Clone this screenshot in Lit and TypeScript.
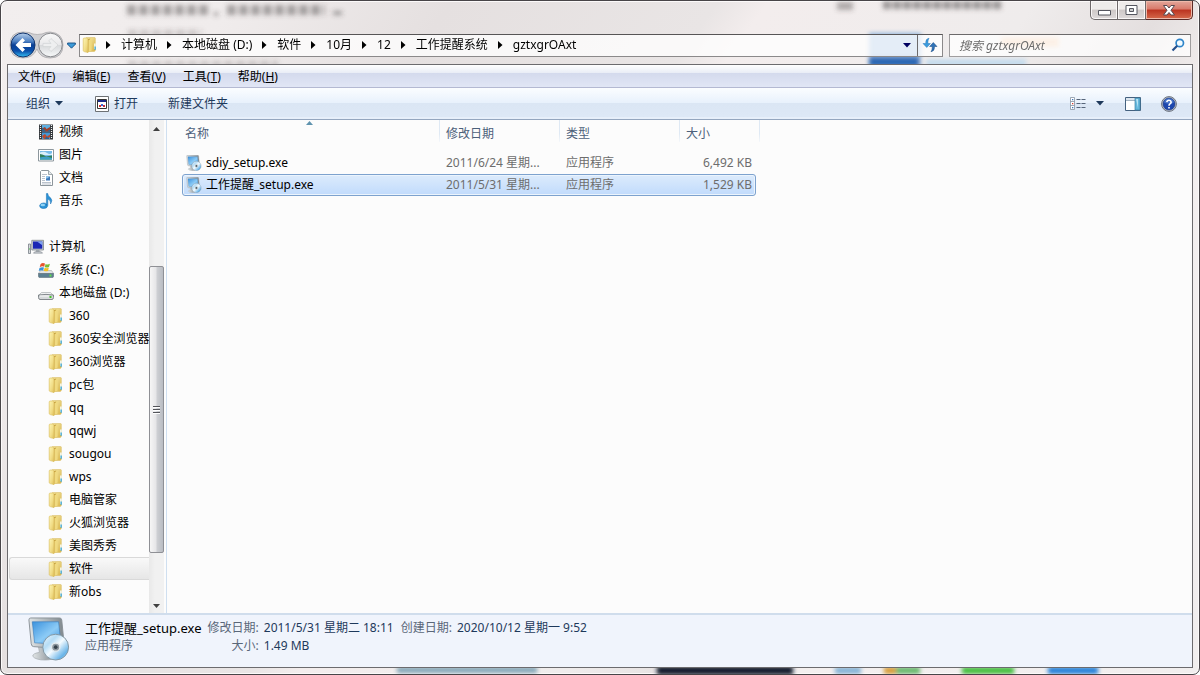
import { LitElement, html, css } from "lit";
import { customElement, state } from "lit/decorators.js";
import { classMap } from "lit/directives/class-map.js";

const folder = html`<svg class="i16" viewBox="0 0 16 16" width="16" height="16" aria-hidden="true">
  <defs><linearGradient id="fa" x1="0" x2="1" y1="0" y2="1"><stop offset="0" stop-color="#f8ecab"/><stop offset="1" stop-color="#d9b54a"/></linearGradient>
  <linearGradient id="fb" x1="0" x2="1" y1="0" y2="1"><stop offset="0" stop-color="#fdf6b4"/><stop offset=".6" stop-color="#f1dc86"/><stop offset="1" stop-color="#dfbf58"/></linearGradient></defs>
  <path d="M4 1.200Q4 .5 5 .5H12.500Q13.300 .5 13.300 1.300V13.300Q13.300 14.400 12 14.500H6Z" fill="url(#fa)" stroke="#dcc06a" stroke-width=".6"/>
  <path d="M5.500 2 8.500 1.500V14L5.500 15.500Z" fill="#c39d3c"/>
  <path d="M1.200 2Q1.200 1 2.200 1H4.600Q6 1.200 6 2.600V15.600L2.200 14.600Q1.200 14.300 1.200 13.400Z" fill="url(#fb)" stroke="#d8ba58" stroke-width=".6"/>
  <path d="M6.500 3.200Q8 3.200 8 1.200L9.600 1.400V13.400L6.500 15.200Z" fill="#f0da80"/>
  <path d="M12 6.500h1.800v5.500H12z" fill="#f4f4e4"/><path d="M12.500 9.500h1.300v3.300h-1.300z" fill="#38a5d8"/></svg>`;

const video = html`<svg viewBox="0 0 16 16" width="16" height="16" aria-hidden="true">
  <path d="M1 .5h14v15H1z" fill="#34383c"/><path d="M4 1h8v6.500H4z" fill="#5fb0e2"/><path d="M4 8.500h8V15H4z" fill="#4596d2"/>
  <path d="M4 4.500 7 3l1.500 2L12 3v4.500H4z" fill="#a33f28"/><path d="M4 3.800 6 5l2 2.500H4zM9 7.500l3-2.200v2.200z" fill="#2f668f"/><path d="M4 12 7 10l2 2.500 3-2V13l-3 2H6z" fill="#bd4a2a"/><path d="M8 12.500 11 14v1H7z" fill="#2a6291"/>
  <path d="M2.500 1v14M13.500 1v14" stroke="#f4f4f4" stroke-width="1.200" stroke-dasharray="1 1"/></svg>`;

const picture = html`<svg viewBox="0 0 16 16" width="16" height="16" aria-hidden="true">
  <path d="M.5 2.500h15v11.500H.5z" fill="#fff" stroke="#8d979d"/><path d="M2 4h12v8.500H2z" fill="#77bce9"/>
  <path d="M2 5.500Q6 4 9 6T14 6V8H2z" fill="#d8effb"/><path d="M2 7Q5 7 8 9.500L14 8.500V12.500H2z" fill="#317f59"/><path d="M2 10.500Q8 9 14 11v1.500H2z" fill="#3b9fc4"/></svg>`;

const docIcon = html`<svg viewBox="0 0 16 16" width="16" height="16" aria-hidden="true">
  <path d="M2.500 1.500V15.500H14.500V4.500L10.500.5H3.500Z" fill="#fff" stroke="#8c959b"/><path d="M10.500.5v4h4" fill="#e4e9ec" stroke="#8c959b" stroke-width=".8"/>
  <path d="M4 4.500h5M4 6.500h3M4 8.500h3M4 10.500h3M4 12.500h9M4 14h9" stroke="#a9b4c0" stroke-width=".8"/><path d="M8 6.500h4v4H8z" fill="#3f79ba"/><path d="M8 6.500h4l-3 2H8z" fill="#8cc5ee"/></svg>`;

const music = html`<svg viewBox="0 0 16 16" width="16" height="16" aria-hidden="true">
  <path d="M8.400 12.500V.6L9.600.3Q10 3 12.200 4.600 15.200 7 12.600 11 13 7.200 9.800 6V12.400Q9.400 15.600 5 15.600 1.500 15.200 1.600 12.600 2.200 9.900 5.600 9.900 7.600 9.900 8.400 11Z" fill="#2b93d6" stroke="#1a6fb2" stroke-width=".5"/>
  <ellipse cx="4.800" cy="12" rx="2.300" ry="1.200" fill="#8fd2f5"/></svg>`;

const computer = html`<svg viewBox="0 0 16 16" width="16" height="16" aria-hidden="true">
  <path d="M.5 5h2v9.500h-2z" fill="#d5d9dc" stroke="#777f86" stroke-width=".8"/><path d="M1 9.500h1v1H1z" fill="#42bd45"/>
  <path d="M3.800 1.300H15.500V11H3.800z" fill="#c8cdd1" stroke="#7e868c" stroke-width=".8"/><path d="M5 2.500h9.300v7.200H5z" fill="#1b27b5"/><path d="M9 2.500h5.300v3.700z" fill="#7fa1ee"/>
  <path d="M8 11h3.500v2H8z" fill="#9da5ab"/><path d="M5.500 14.200Q6 12.600 8 12.600h4q2 0 2.500 1.600z" fill="#c9ced2" stroke="#848c92" stroke-width=".6"/></svg>`;

const driveC = html`<svg viewBox="0 0 16 16" width="16" height="16" aria-hidden="true">
  <path d="M2.500 8.500H13.500L15.600 11.500H.4Z" fill="#e1e4e5" stroke="#a1a7ab" stroke-width=".6"/><path d="M.4 11.500H15.600V14.500Q15.400 15.600 14 15.600H2Q.6 15.600.4 14.500Z" fill="#5c7f92" stroke="#5d6b75" stroke-width=".6"/><path d="M11.500 12.500h2v2h-2z" fill="#5ee04b"/>
  <path d="M2.500 2.200Q4.500 0 7 1.600L6.200 4.700Q4 3.700 1.700 5.200Z" fill="#e8542c"/><path d="M7.600 1.900Q9.600 3 11.900 1.800L11 5Q8.800 6 6.800 5Z" fill="#77bd35"/><path d="M1.500 5.900Q3.800 4.700 6 5.500L5.200 8.600Q3.200 7.800.7 9Z" fill="#3a93d9"/><path d="M6.600 5.800Q8.800 6.700 10.800 5.800L10 8.900Q7.800 9.800 5.800 8.800Z" fill="#f7c023"/></svg>`;
const driveD = html`<svg viewBox="0 0 16 16" width="16" height="16" aria-hidden="true">
  <path d="M3.500 7.500H12.500L15.500 10.500H.5Z" fill="#f0f1f2" stroke="#a9adb0" stroke-width=".7"/><path d="M.5 10Q8 8.800 15.500 10V12.500Q15.300 14.500 14 14.500H2Q.7 14.500 .5 12.500Z" fill="#d5d8da" stroke="#777d81" stroke-width=".9"/><path d="M2 11h9" stroke="#f9f9f9"/><path d="M11.500 11h2v2h-2z" fill="#45c72d"/></svg>`;

const setup = (size: number, key: string) => html`<svg viewBox="0 0 44 46" width=${size} height=${size} aria-hidden="true">
  <defs><linearGradient id=${"s" + key} x1="0" y1="0" x2="1" y2="1"><stop offset="0" stop-color="#3b92dd"/><stop offset=".55" stop-color="#8ccbf6"/><stop offset="1" stop-color="#3a8fdc"/></linearGradient>
  <linearGradient id=${"r" + key} x1="0" y1="0" x2="1" y2="0"><stop offset="0" stop-color="#e1e5e6"/><stop offset="1" stop-color="#7c858b"/></linearGradient>
  <linearGradient id=${"d" + key} x1="0" y1="0" x2="1" y2="1"><stop offset="0" stop-color="#f1f9fe"/><stop offset=".3" stop-color="#b5dcf5"/><stop offset=".5" stop-color="#f4fbff"/><stop offset=".8" stop-color="#67b3e8"/><stop offset="1" stop-color="#d7effc"/></linearGradient></defs>
  <path d="M11 31 22 32V38L28 41Q27 45 18 45 8 45 5 41 5 38 12 37Z" fill=${`url(#r${key})`} stroke="#a0a6ab" stroke-width=".7"/>
  <path d="M1 3Q1 1 3 1H33Q35 1 35.300 3L38 30Q38 33 36 33L6 31Q3.800 31 3.400 28Z" fill=${`url(#r${key})`} stroke="#899197"/>
  <path d="M4.500 5H32L34.500 28.500 7 27Z" fill=${`url(#s${key})`} stroke="#3278ba" stroke-width=".6"/>
  <circle cx="29" cy="31.500" r="13.500" fill=${`url(#d${key})`} stroke="#81949f"/>
  <circle cx="29" cy="31.500" r="4.300" fill="#8b969e" stroke="#e5ecef" stroke-width="1.300"/><circle cx="29" cy="31.500" r="1.900" fill="#35424b"/></svg>`;

const down = html`<svg viewBox="0 0 8 5" width="8" height="5" aria-hidden="true"><path d="M0 0h8L4 4.600z" fill="currentColor"/></svg>`;
const crumbArrow = html`<svg viewBox="0 0 5 8" width="5" height="8" aria-hidden="true"><path d="M0 0 4.500 4 0 8z" fill="#000"/></svg>`;

const tree = [
  { icon: video, name: "视频", depth: 1 },
  { icon: picture, name: "图片", depth: 1 },
  { icon: docIcon, name: "文档", depth: 1 },
  { icon: music, name: "音乐", depth: 1 },
  null,
  { icon: computer, name: "计算机", depth: 0 },
  { icon: driveC, name: "系统 (C:)", depth: 1 },
  { icon: driveD, name: "本地磁盘 (D:)", depth: 1 },
  ...["360", "360安全浏览器", "360浏览器", "pc包", "qq", "qqwj", "sougou", "wps", "电脑管家", "火狐浏览器", "美图秀秀", "软件", "新obs"].map((name) => ({ icon: folder, name, depth: 2 })),
];
const crumbs = ["计算机", "本地磁盘 (D:)", "软件", "10月", "12", "工作提醒系统", "gztxgrOAxt"];
const menus = [["文件", "F"], ["编辑", "E"], ["查看", "V"], ["工具", "T"], ["帮助", "H"]];
const files = [
  { name: "sdiy_setup.exe", date: "2011/6/24 星期...", type: "应用程序", size: "6,492 KB" },
  { name: "工作提醒_setup.exe", date: "2011/5/31 星期...", type: "应用程序", size: "1,529 KB" },
];

@customElement("app-root")
export class AppRoot extends LitElement {
  @state() private folderName = "软件";
  @state() private fileName = "工作提醒_setup.exe";

  static styles = css`
    :host { display: block; height: 100vh; font: 12px/16px "Noto Sans", "Noto Sans CJK SC", sans-serif; color: #000; background: #fff; }
    * { box-sizing: border-box; }
    button { font: inherit; color: inherit; background: none; border: 0; padding: 0; margin: 0; text-align: left; white-space: nowrap; }
    svg { display: block; flex: none; }
    .window { position: relative; height: 100%; display: flex; flex-direction: column; padding: 0 6px 6px; border: 1px solid #484548; border-radius: 7px; overflow: hidden;
      background: linear-gradient(125deg, #f2eeee 0, #f0ecec 14%, #e5e0e0 27%, #e9e5e5 43%, #f3eded 46%, #efecec 62%, #e4dfdf 70%, #f3efef 76%, #f1eeee 100%); box-shadow: inset 0 0 0 1px #fcfafa; }
    .glass { position: absolute; left: 0; top: 0; width: 100%; height: 100%; }
    .chrome { position: relative; height: 63px; flex: none; display: flex; flex-direction: column; justify-content: space-between; }
    .caption { display: flex; justify-content: flex-end; height: 19px; }
    .caption button { height: 19px; width: 28px; border: 1px solid #6d6869; border-top: 0; display: grid; place-items: center; background: linear-gradient(#eeebea 45%, #cfc9c8 50%, #dedada); box-shadow: inset 0 0 0 1px #faf7f7; }
    .caption button + button { border-left: 0; }
    .caption .min { border-radius: 0 0 0 5px; padding-top: 5px; }
    .caption .close { width: 47px; border-color: #5b2a26; border-radius: 0 0 5px 0; background: linear-gradient(#e3a79b 0, #d8796a 45%, #bb3320 50%, #d66a4c); box-shadow: inset 0 0 0 1px #efb9aa; }
    .navrow { display: flex; align-items: center; padding: 0 2px 5px 2px; }
    .backs { flex: none; margin-right: 2px; display: flex; align-items: center; gap: 3px; width: 68px; }
    .address { flex: 1; min-width: 0; display: flex; height: 23px; border: 1px solid #8b898a; border-top-color: #575556; background: rgba(255,255,255,.76); margin-right: 6px; align-items: stretch; }
    .crumbs { flex: 1; min-width: 0; overflow: hidden; display: flex; align-items: center; gap: 10px; padding-left: 2px; }
    .crumbs .i16 { margin-right: -2px; }
    .drop { width: 20px; display: grid; place-items: center; color: #000060; }
    .refresh { width: 25px; display: grid; place-items: center; border-left: 1px solid #6c6a6b; }
    .search { width: 242px; display: flex; align-items: center; height: 23px; border: 1px solid #a09e9f; border-top-color: #6b696a; background: rgba(255,255,255,.76); padding: 0 5px 0 9px; }
    .search input { flex: 1; min-width: 0; border: 0; outline: 0; background: none; font: inherit; font-style: italic; padding: 2px 0 0; }
    .search input::placeholder { color: #6d6d6d; opacity: 1; }
    .frame { position: relative; flex: 1; min-height: 0; display: flex; flex-direction: column; border: 1px solid #6c6b6e; background: #fcfcfc; }
    .menubar { height: 23px; flex: none; display: flex; align-items: center; padding: 2px 0 0 10px; gap: 17px; border-bottom: 1px solid #b4b9d2; background: linear-gradient(#fff 0, #e9edf6 36%, #d4daed 37%, #e1e6f5 100%); }
    .toolbar { height: 32px; flex: none; display: flex; align-items: center; padding: 0 15px 0 18px; color: #1e395b; border-bottom: 1px solid #94a6bf; background: linear-gradient(#fbfdff 0, #e8f1fc 48%, #dbe6f4 49%, #dde8f6 94%, #e7effa 95%); }
    .toolbar button { display: flex; align-items: center; gap: 5px; }
    .organize { margin-right: 32px; }
    .open { margin-right: 30px; }
    .grow { flex: 1; }
    .toolbar .views { margin-right: 21px; gap: 10px; }
    .preview { margin-right: 20px; }
    .body { flex: 1; min-height: 0; display: flex; }
    .tree { width: 141px; flex: none; overflow: hidden; display: flex; flex-direction: column; padding-left: 1px; }
    .node { display: flex; align-items: center; gap: 5px; height: 23px; flex: none; border: 1px solid transparent; border-right: 0; border-radius: 3px 0 0 3px; width: 100%; }
    .d0 { padding-left: 18px; } .d1 { padding-left: 28px; } .d2 { padding-left: 38px; }
    .node.on { border-color: #d9d9d9; background: linear-gradient(#f9f9f9, #e6e6e6); }
    .blank { height: 23px; flex: none; }
    .scroll { width: 15px; flex: none; background: linear-gradient(90deg, #e9e9e9, #f1f1f1 40%); display: flex; flex-direction: column; align-items: center; padding: 7px 0 5px; color: #404040; }
    .space { flex: 134; }
    .thumb { flex: 282; width: 15px; border: 1px solid #8f9095; border-radius: 2px; background: linear-gradient(90deg, #f6f6f6 0, #e6e6e8 45%, #cdcfd3 55%, #b9bcc2 100%); display: grid; place-items: center; }
    .space.low { flex: 50; }
    .list { flex: 1; min-width: 0; margin-left: 2px; border-left: 1px solid #cfdff0; padding-left: 15px; overflow: hidden; }
    table { display: block; }
    thead, tbody { display: block; }
    thead { height: 32px; }
    tr { display: grid; grid-template-columns: 258px 120px 120px 80px; width: 578px; }
    th { position: relative; font-weight: 400; text-align: left; color: #4c607a; padding: 6px 0 0 6px; height: 22px; line-height: 16px; border-right: 1px solid; border-image: linear-gradient(#dfe9f4, #dfe9f4 60%, #f8fafc) 1; border-width: 0 1px 0 0; }
    th:first-child { padding-left: 3px; }
    .sort { position: absolute; left: 124px; top: 1px; }
    tbody tr { height: 22px; width: 574px; grid-template-columns: 257px 120px 120px 75px; align-items: center; border: 1px solid transparent; border-radius: 3px; color: #6d6d6d; }
    tbody tr.on { border-color: #7da2ce; background: linear-gradient(#dcebfc, #c1dbfc); box-shadow: inset 0 0 0 1px #ebf4fd; }
    td { padding: 0 0 0 6px; white-space: nowrap; }
    td:first-child { padding-left: 3px; display: flex; align-items: center; gap: 4px; color: #000; }
    td:last-child { text-align: right; padding-right: 3px; }
    .details { flex: none; height: 54px; display: flex; border-top: 2px solid #d0ddec; background: #f0f4fc; padding: 2px 0 0 19px; line-height: 18px; color: #5a6779; white-space: nowrap; }
    .title { margin: 2px 6px 0 14px; }
    .name { color: #000; font-size: 13px; }
    dl { margin: 2px 0 0; display: grid; grid-template-columns: auto 134px auto auto; column-gap: 5px; align-content: start; }
    dt { text-align: right; } dd { margin: 0; color: #1e395b; }
    .third { margin-left: -2px; }
  `;

  private glass() {
    return html`<svg class="glass" aria-hidden="true">
      <defs><filter id="b" x="-20%" y="-100%" width="140%" height="300%"><feGaussianBlur stdDeviation="2.500"/></filter><filter id="c" x="-20%" y="-80%" width="140%" height="260%"><feGaussianBlur stdDeviation="2"/></filter></defs>
      <g filter="url(#b)" fill="none" stroke="#4c4747"><path opacity=".45" stroke-width="10" stroke-dasharray="9 3" d="M126 9h84M226 9h98"/><path opacity=".5" stroke-width="4" d="M213 13h4M332 12h9"/><path opacity=".25" stroke-width="6" stroke-dasharray="9 3" d="M127 32h74M127 63h150"/><path opacity=".4" stroke-width="8" d="M836 5h16"/><path opacity=".55" stroke-width="8" stroke-dasharray="8 2" d="M882 4h118"/></g>
      <g filter="url(#c)"><path d="M868 32h52v34h-52z" fill="#8fb4dc"/><path d="M868 56h50v10h-50z" fill="#2b68b4"/><path d="M925 58h100v8H925z" fill="#c6dced"/><path d="M1000 36h58v10h-58z" fill="#f3c49c"/></g>
      <svg y="100%" overflow="visible"><g filter="url(#c)"><path d="M396-7h140v6H396z" fill="#7fa3b5"/><path d="M656-8h136v9H656z" fill="#151e2e"/><path d="M834-7h26v7h-26z" fill="#84b2d6"/><path d="M883-7h16v7h-16z" fill="#d79b35"/><path d="M895-7h24v7h-24z" fill="#66b76a"/><path d="M961-7h52v7h-52z" fill="#3fbd3b"/><path d="M1047-7h50v7h-50z" fill="#1b7dd8"/></g></svg>
    </svg>`;
  }

  private navButtons() {
    return html`<div class="backs">
      <svg viewBox="0 0 55 28" width="55" height="28" role="img" aria-label="后退 前进">
        <defs><linearGradient id="bk" x1="0" y1="0" x2="0" y2="1"><stop offset="0" stop-color="#b7cfea"/><stop offset=".35" stop-color="#4d80c2"/><stop offset=".5" stop-color="#0a3f95"/><stop offset=".75" stop-color="#0c50ab"/><stop offset="1" stop-color="#35c0f4"/></linearGradient>
        <linearGradient id="fw" x1="0" y1="0" x2="0" y2="1"><stop offset="0" stop-color="#f9f9f9"/><stop offset=".48" stop-color="#e9e9eb"/><stop offset=".52" stop-color="#d8dadc"/><stop offset="1" stop-color="#f7f8f9"/></linearGradient></defs>
        <path d="M14 1Q21 1 24 3 28 4 33 3 37 1 41 1 54 2 54 14 54 27 41 27 31 27 28 18 24 27 14 27 1 27 1 14 1 1 14 1Z" fill="#cfcfd2" stroke="#a5a3a6" stroke-width=".7"/>
        <circle cx="14" cy="14" r="12" fill="url(#bk)" stroke="#12356f"/><path d="M6.500 14 13.500 7 16 9.400 13.500 12H22V16H13.500L16 18.600 13.500 21Z" fill="#fff"/>
        <circle cx="41.500" cy="14" r="11.800" fill="url(#fw)" stroke="#88898d"/><path d="M49 14 42 7.500 39.700 9.900 42 12.400H34V15.600H42L39.700 18.100 42 20.500Z" fill="#eeeff0" stroke="#d0d2d4" stroke-width=".7"/></svg>
      <svg viewBox="0 0 9 7" width="9" height="7" aria-hidden="true"><path d="M.6 1H8.400V2.200L4.500 6.200.6 2.200Z" fill="#3c9ad8" stroke="#164c80" stroke-width=".9"/></svg>
    </div>`;
  }

  render() {
    return html`<div class="window">
      ${this.glass()}
      <header class="chrome">
        <div class="caption">
          <button class="min" aria-label="最小化"><svg viewBox="0 0 13 6" width="13" height="6"><path d="M.5.5h12v4.500H.5z" fill="#fff" stroke="#55565f"/></svg></button>
          <button aria-label="最大化"><svg viewBox="0 0 13 10" width="13" height="10"><path d="M1 .5h11v9H1z" fill="#fff" stroke="#55565f"/><path d="M4.500 3.500h4v3h-4z" fill="#ccc" stroke="#55565f"/></svg></button>
          <button class="close" aria-label="关闭"><svg viewBox="0 0 12 11" width="12" height="11"><path d="M.5.5H4L6 3 8 .5h3.500L8 5.300 11.500 10H8L6 7.500 4 10H.5L4 5.300Z" fill="#fff" stroke="#55484f"/></svg></button>
        </div>
        <div class="navrow">
          ${this.navButtons()}
          <div class="address">
            <div class="crumbs">${folder}${crumbs.map((c) => html`${crumbArrow}<button>${c}</button>`)}</div>
            <button class="drop" aria-label="历史记录">${down}</button>
            <button class="refresh" aria-label="刷新"><svg viewBox="0 0 16 16" width="16" height="16"><path d="M7 1.200Q3.800 1.800 3.800 5V6.500H1L4.800 10.500 8.400 6.500H5.900V5Q5.900 3 7 1.200Z" fill="#3b9cdd" stroke="#2273b8" stroke-width=".5"/><path d="M9 14.800Q12.400 14 12.400 11V9.500H15L11.300 5.500 7.600 9.500H10.200V11Q10.200 13 9 14.800Z" fill="#2f72b8" stroke="#17477f" stroke-width=".5"/></svg></button>
          </div>
          <label class="search"><input type="text" aria-label="搜索" placeholder="搜索 gztxgrOAxt" />
            <svg viewBox="0 0 14 14" width="14" height="14" aria-hidden="true"><circle cx="8.800" cy="5" r="3.700" fill="#f3fbff" stroke="#2e84c9" stroke-width="1.700"/><path d="M6.200 7.800 1.500 12.500" stroke="#244f8c" stroke-width="2.200"/></svg></label>
        </div>
      </header>
      <div class="frame">
        <div class="menubar">${menus.map(([t, k]) => html`<button>${t}(<u>${k}</u>)</button>`)}</div>
        <div class="toolbar">
          <button class="organize">组织${down}</button>
          <button class="open"><svg viewBox="0 0 14 16" width="14" height="16" aria-hidden="true"><path d="M.5.5h13v15H.5z" fill="#fff" stroke="#6d7175"/><path d="M2.500 3.500h9v9h-9z" fill="#fff" stroke="#333"/><path d="M3 4h8v2H3z" fill="#1c2a86"/><path d="M4 9h2v2H4z" fill="#d53434"/><path d="M6 8h2v2H6z" fill="#3d66d8"/><path d="M8 9h2v2H8z" fill="#c32d43"/></svg>打开</button>
          <button>新建文件夹</button>
          <span class="grow"></span>
          <button class="views" aria-label="更改您的视图"><svg viewBox="0 0 16 13" width="16" height="13"><path d="M.5.5h4v12h-4zM.5 4.500h4M.5 8.500h4" fill="#fff" stroke="#8794a4" stroke-width=".8"/><path d="M2 2h1.300v1.300H2z" fill="#3973b8"/><path d="M2 6h1.300v1.300H2z" fill="#d43b2e"/><path d="M2 10h1.300v1.300H2z" fill="#3973b8"/><path d="M6.500 2.500h9M6.500 6.500h9M6.500 10.500h9" stroke="#56657a" stroke-dasharray="4 1"/></svg>${down}</button>
          <button class="preview" aria-label="显示预览窗格"><svg viewBox="0 0 16 14" width="16" height="14"><path d="M.5.5h15v13H.5z" fill="#fff" stroke="#44617f"/><path d="M1 1h9v2H1z" fill="#dbe5ee"/><path d="M1 3.500h9" stroke="#7d93a8" stroke-width=".7"/><path d="M10 1h5v12h-5z" fill="#66b8dc" stroke="#3c83a8" stroke-width=".7"/><path d="M11 2h2v9z" fill="#b8e3f4"/></svg></button>
          <button aria-label="获取帮助"><svg viewBox="0 0 16 16" width="16" height="16"><circle cx="8" cy="8" r="7.400" fill="#c4cad2" stroke="#6b727e"/><circle cx="8" cy="8" r="6" fill="#1d47ae" stroke="#1a357c" stroke-width=".6"/><path d="M3 6.500Q4 2.600 8 2.600T13 6.500Q8 9 3 6.500Z" fill="#4673c8"/><path d="M5.800 6.200Q6 4.300 8 4.300T10.200 6.100Q10.200 7.200 9 7.900 8 8.500 8 9.700M8 11v1.500" fill="none" stroke="#fff" stroke-width="1.600"/></svg></button>
        </div>
        <div class="body">
          <nav class="tree">${tree.map((n) => n ? html`<button class=${classMap({ node: true, ["d" + n.depth]: true, on: n.name === this.folderName })} @click=${() => (this.folderName = n.name)}>${n.icon}<span>${n.name}</span></button>` : html`<div class="blank"></div>`)}</nav>
          <div class="scroll">
            <svg viewBox="0 0 7 4" width="7" height="4"><path d="M0 4h7L3.500 0z" fill="currentColor"/></svg>
            <div class="space"></div>
            <div class="thumb"><svg viewBox="0 0 7 8" width="7" height="8"><path d="M0 .5h7M0 3.500h7M0 6.500h7" stroke="#53555a"/><path d="M0 1.500h7M0 4.500h7M0 7.500h7" stroke="#fff"/></svg></div>
            <div class="space low"></div>
            <svg viewBox="0 0 7 4" width="7" height="4"><path d="M0 0h7L3.500 4z" fill="currentColor"/></svg>
          </div>
          <main class="list">
            <table>
              <thead><tr><th>名称<svg class="sort" viewBox="0 0 7 4" width="7" height="4"><path d="M0 4h7L3.500 0z" fill="#5f93ae"/></svg></th><th>修改日期</th><th>类型</th><th>大小</th></tr></thead>
              <tbody>${files.map((f, i) => html`<tr class=${classMap({ on: f.name === this.fileName })} @click=${() => (this.fileName = f.name)}><td>${setup(16, "f" + i)}<span>${f.name}</span></td><td>${f.date}</td><td>${f.type}</td><td>${f.size}</td></tr>`)}</tbody>
            </table>
          </main>
        </div>
        <footer class="details">
          ${setup(44, "big")}
          <div class="title"><div class="name">工作提醒_setup.exe</div><div>应用程序</div></div>
          <dl><dt>修改日期:</dt><dd>2011/5/31 星期二 18:11</dd><dt class="third">创建日期:</dt><dd>2020/10/12 星期一 9:52</dd><dt>大小:</dt><dd>1.49 MB</dd></dl>
        </footer>
      </div>
    </div>`;
  }
}
